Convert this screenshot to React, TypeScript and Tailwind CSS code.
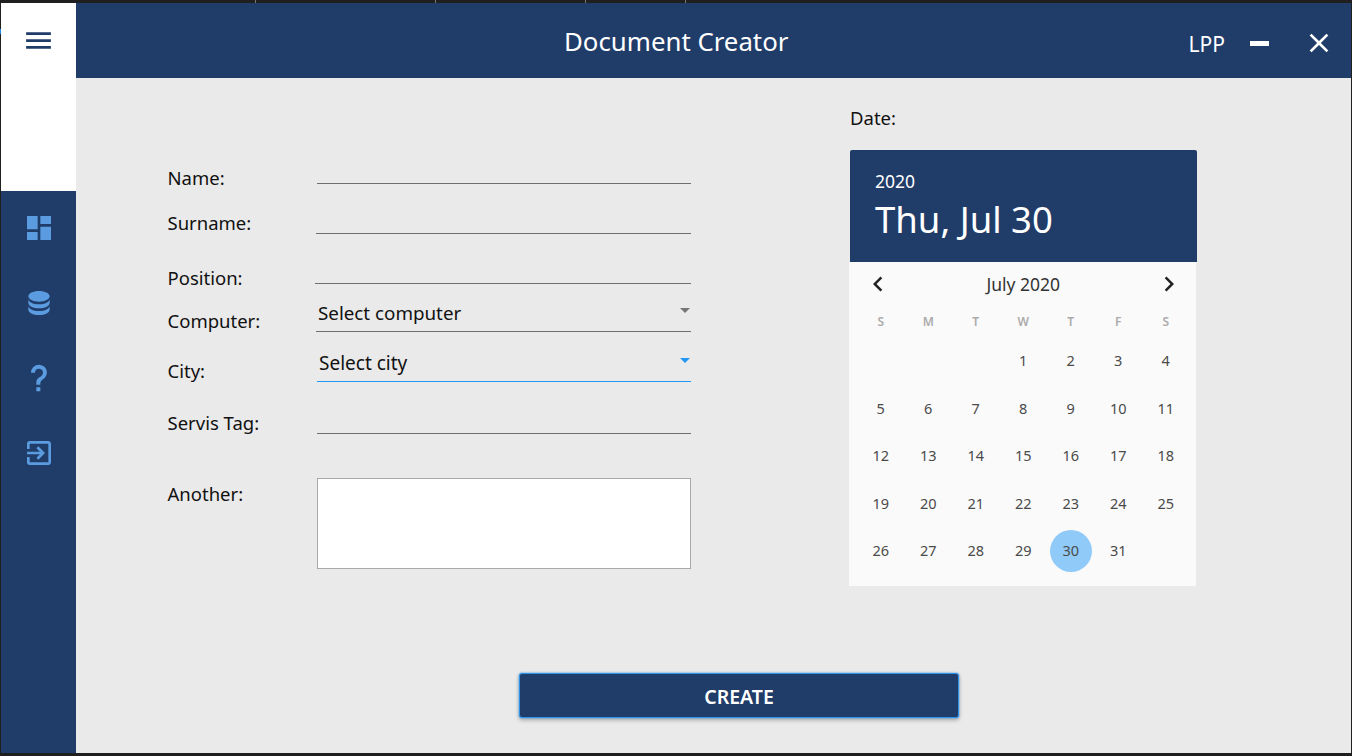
import { MdChevronLeft, MdChevronRight, MdClose, MdDashboard, MdExitToApp, MdMenu } from "react-icons/md";

const weeks = [
  ["", "", "", "1", "2", "3", "4"],
  ["5", "6", "7", "8", "9", "10", "11"],
  ["12", "13", "14", "15", "16", "17", "18"],
  ["19", "20", "21", "22", "23", "24", "25"],
  ["26", "27", "28", "29", "30", "31", ""],
];
const weekDays = ["S", "M", "T", "W", "T", "F", "S"];
const ticks = ["w-[256px]", "w-[180px]", "w-[150px]", "w-[100px]"];

const NavIcon = ({ children }: { children: React.ReactNode }) => (
  <div className="h-[75px] pb-[2px] pl-px flex items-center justify-center text-[#5b9bdf]">{children}</div>
);

const Row = ({ label, height, labelGap, line, children }: { label: string; height: string; labelGap: string; line: string; children?: React.ReactNode }) => (
  <div className={`flex items-end ${height}`}>
    <span className={`${labelGap} -ml-[0.5px] w-[148.5px] shrink-0 text-[18.5px] leading-6 text-[#111]`}>{label}</span>
    <div className={`${line} flex-1 border-b border-[#6f6f6f] flex items-end justify-between h-8`}>{children}</div>
  </div>
);

export default function App() {
  return (
    <div className="relative h-[756px] w-[1352px] overflow-hidden bg-[#1f1f1f] flex flex-col font-['Noto_Sans','Open_Sans',sans-serif]">
      {/* window strip */}
      <div className="h-[3px] flex shrink-0">
        {ticks.map((w, i) => (
          <div key={i} className={`${w} border-r border-[#777]`} />
        ))}
      </div>
      <div className="absolute left-0 top-[29px] h-[5px] w-px bg-[#1e88e5]" />

      <div className="flex-1 flex ml-px mr-px mb-[3px] min-h-0">
        {/* Sidebar */}
        <aside className="w-[75px] shrink-0 flex flex-col bg-[#203c69]">
          <div className="h-[188px] bg-white text-[#203c69]">
            <div className="h-[75px] flex items-center justify-center">
              <MdMenu size={33} />
            </div>
          </div>
          <NavIcon>
            <MdDashboard size={32} />
          </NavIcon>
          <NavIcon>
            <svg viewBox="0 0 24 24" className="w-8 h-8" fill="currentColor">
              <path d="M12,3C7.58,3 4,4.79 4,7C4,9.21 7.58,11 12,11C16.42,11 20,9.21 20,7C20,4.79 16.42,3 12,3M4,9V12C4,14.21 7.58,16 12,16C16.42,16 20,14.21 20,12V9C20,11.21 16.42,13 12,13C7.58,13 4,11.21 4,9M4,14V17C4,19.21 7.58,21 12,21C16.42,21 20,19.21 20,17V14C20,16.21 16.42,18 12,18C7.58,18 4,16.21 4,14Z" />
            </svg>
          </NavIcon>
          <NavIcon>
            <svg viewBox="0 0 24 24" className="w-8 h-8" fill="currentColor">
              <path d="M10,19H13V22H10V19M12,2C17.35,2.22 19.68,7.62 16.5,11.67C15.67,12.67 14.33,13.33 13.67,14.17C13,15 13,16 13,17H10C10,15.33 10,13.92 10.67,12.92C11.33,11.92 12.67,11.33 13.5,10.67C15.92,8.43 15.32,5.26 12,5A3,3 0 0,0 9,8H6A6,6 0 0,1 12,2Z" />
            </svg>
          </NavIcon>
          <NavIcon>
            <MdExitToApp size={32} />
          </NavIcon>
        </aside>

        <main className="flex-1 flex flex-col bg-[#eaeaea] min-w-0">
          {/* Header */}
          <header className="h-[75px] shrink-0 bg-[#203c69] flex items-center text-white">
            <h1 className="pl-[488px] text-[25.8px] leading-8">Document Creator</h1>
            <div className="ml-auto pt-[5px] flex items-center">
              <span className="text-[21px] leading-6 mt-[1px]">LPP</span>
              <div className="ml-[25px] w-[19px] h-[5px] bg-white" />
              <MdClose size={32} className="ml-[34px] mr-[16px]" />
            </div>
          </header>

          {/* Body */}
          <div className="flex-1 flex pl-[92px] min-h-0">
            <form className="w-[523px] shrink-0 pt-[72px]">
              <Row label="Name:" height="h-[34px]" labelGap="mb-[-6px]" line="ml-px" />
              <Row label="Surname:" height="h-[50px]" labelGap="mb-[-1px]" line="" />
              <Row label="Position:" height="h-[50px]" labelGap="mb-[-6px]" line="ml-[-1px]" />
              <Row label="Computer:" height="h-[48px]" labelGap="mb-[-1px]" line="">
                <span className="text-[18.8px] leading-6 mb-[6px] text-[#111] ml-[2px]">Select computer</span>
                <span className="mb-[18px] mr-px border-x-[5px] border-x-transparent border-t-[5px] border-t-[#757575]" />
              </Row>
              <div className="flex items-end h-[50px]">
                <span className="-ml-[0.5px] mb-[-1px] w-[148.5px] shrink-0 text-[18.5px] leading-6 text-[#111]">City:</span>
                <div className="ml-px flex-1 border-b border-b-[#2196f3] flex items-end justify-between h-8">
                  <span className="text-[19px] leading-6 mb-[6px] text-[#111] ml-[2px]">Select city</span>
                  <span className="mb-[18px] mr-px border-x-[5px] border-x-transparent border-t-[5px] border-t-[#2196f3]" />
                </div>
              </div>
              <Row label="Servis Tag:" height="h-[52px]" labelGap="mb-[-1px]" line="ml-px" />
              <div className="flex mt-[44px]">
                <span className="-ml-[0.5px] w-[149.5px] shrink-0 text-[18.5px] leading-6 text-[#111] mt-[4px]">Another:</span>
                <div className="flex-1 h-[91px] bg-white border border-[#a9a9a9]" />
              </div>
            </form>

            {/* Date */}
            <div className="ml-[159px] w-[347px] pt-[28px]">
              <div className="text-[18.5px] leading-6 text-[#111] h-[44px]">Date:</div>
              <div className="h-[112px] bg-[#203c69] rounded-t-[2px] pl-[25px] pt-[19px] text-white">
                <div className="text-[17.5px] leading-6">2020</div>
                <div className="mt-[2px] text-[36.5px] leading-[48px]">Thu, Jul 30</div>
              </div>
              <div className="-ml-px mr-px h-[324px] bg-[#fafafa] pl-2 pr-[6.5px]">
                <div className="flex items-center justify-between h-[45px] pl-[6px] pr-[6px] text-[#222]">
                  <MdChevronLeft size={30} className="-mt-px" />
                  <span className="text-[17.5px] text-[#333]">July 2020</span>
                  <MdChevronRight size={30} className="-mt-px" />
                </div>
                <div className="grid grid-cols-7 h-[29px] items-center text-center text-[12px] font-semibold text-[#ababab]">
                  {weekDays.map((d, i) => (
                    <span key={i}>{d}</span>
                  ))}
                </div>
                <div className="grid grid-cols-7 auto-rows-[47.5px] mt-[1.5px] text-center text-[14.5px] text-[#4a4a4a]">
                  {weeks.flat().map((d, i) => (
                    <div key={i} className="flex items-center justify-center">
                      {d === "30" ? (
                        <span className="w-[42px] h-[42px] rounded-full bg-[#90caf9] flex items-center justify-center">{d}</span>
                      ) : (
                        d
                      )}
                    </div>
                  ))}
                </div>
              </div>
            </div>
          </div>

          <div className="pl-[443px] pb-[35px] shrink-0">
            <button className="w-[440px] h-[45px] pt-[2px] bg-[#203c69] border border-[#2f93ea] rounded-[3px] shadow-[0_0_2px_#2f93ea,0_2px_4px_rgba(0,0,0,0.3)] text-white text-[19.5px] font-semibold">
              CREATE
            </button>
          </div>
        </main>
      </div>
    </div>
  );
}
